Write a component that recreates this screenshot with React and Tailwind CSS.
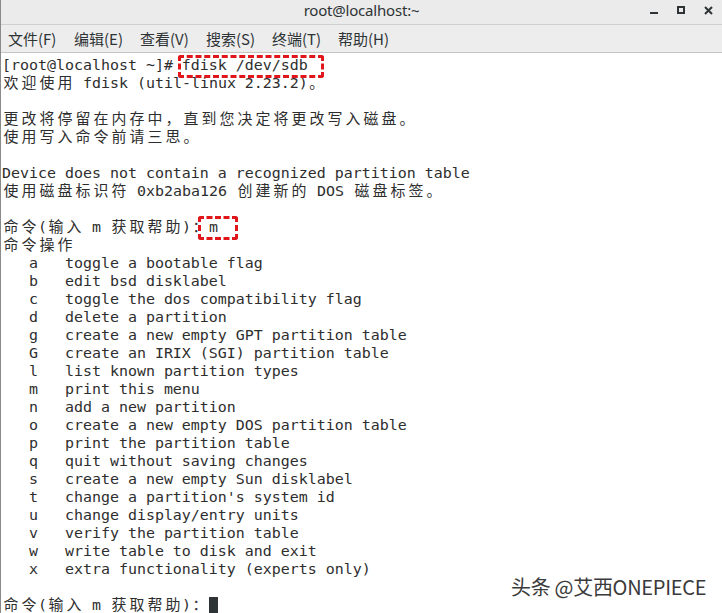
import React from 'react';

const mono = { fontFamily: '"DejaVu Sans Mono", "Noto Sans CJK SC", monospace' };

const menus = ['文件(F)', '编辑(E)', '查看(V)', '搜索(S)', '终端(T)', '帮助(H)'];

const lines = [
    '[root@localhost ~]# fdisk /dev/sdb',
    '欢迎使用 fdisk (util-linux 2.23.2)。',
    '',
    '更改将停留在内存中，直到您决定将更改写入磁盘。',
    '使用写入命令前请三思。',
    '',
    'Device does not contain a recognized partition table',
    '使用磁盘标识符 0xb2aba126 创建新的 DOS 磁盘标签。',
    '',
    '命令(输入 m 获取帮助)：m',
    '命令操作',
    '   a   toggle a bootable flag',
    '   b   edit bsd disklabel',
    '   c   toggle the dos compatibility flag',
    '   d   delete a partition',
    '   g   create a new empty GPT partition table',
    '   G   create an IRIX (SGI) partition table',
    '   l   list known partition types',
    '   m   print this menu',
    '   n   add a new partition',
    '   o   create a new empty DOS partition table',
    '   p   print the partition table',
    '   q   quit without saving changes',
    '   s   create a new empty Sun disklabel',
    "   t   change a partition's system id",
    '   u   change display/entry units',
    '   v   verify the partition table',
    '   w   write table to disk and exit',
    '   x   extra functionality (experts only)',
    '',
];

// wide (CJK) characters take two terminal cells
const Cells = ({ text }) => {
    const parts = [];
    let buf = '';
    Array.from(text).forEach((ch, i) => {
        if (ch.charCodeAt(0) >= 0x2e80) {
            if (buf) parts.push(buf);
            buf = '';
            parts.push(
                <span key={i} className="inline-block w-[18px] text-center">{ch}</span>
            );
        } else {
            buf += ch;
        }
    });
    if (buf) parts.push(buf);
    return parts;
};

const App = () => {
    return (
        <div className="w-[722px] h-[613px] overflow-hidden bg-white border-l border-[#8a8a8a] relative">
            {/* title bar */}
            <div
                className="h-[25px] bg-[#ebebeb] border-b border-[#cfcfcf] flex items-center relative"
                style={{ fontFamily: '"Noto Sans", "Liberation Sans", sans-serif' }}
            >
                <div className="flex-1 text-center text-[15px] leading-[15px] text-[#2e3436] pb-[4px] tracking-[-0.2px]">root@localhost:~</div>
                <div className="absolute right-0 top-0 h-full flex items-center gap-[19px] pr-[9px] pb-[4px] text-[#2e3436]">
                    <svg width="8" height="8" viewBox="0 0 8 8"><rect x="0" y="6" width="8" height="2" fill="currentColor" /></svg>
                    <svg width="8" height="8" viewBox="0 0 8 8"><rect x="1" y="1" width="6" height="6" fill="none" stroke="currentColor" strokeWidth="2" /></svg>
                    <svg width="9" height="9" viewBox="0 0 9 9"><path d="M1 1L8 8M8 1L1 8" stroke="currentColor" strokeWidth="2" /></svg>
                </div>
            </div>
            {/* menu bar */}
            <div
                className="h-[28px] bg-[#ededed] border-b border-[#c4c4c4] flex items-center pl-[7px] gap-[14px] text-[15px] text-[#2e3436] pt-[2px]"
                style={{ fontFamily: '"Noto Sans CJK SC", "DejaVu Sans", sans-serif' }}
            >
                {menus.map((m) => (
                    <span key={m} className="w-[52px] whitespace-nowrap">{m}</span>
                ))}
            </div>
            {/* terminal */}
            <div className="pl-[1px] pt-[3px] text-[14.95px] text-[#2e2e2e]" style={mono}>
                {lines.map((l, i) => (
                    <div key={i} className="h-[18px] leading-[18px] whitespace-pre">
                        <Cells text={l} />
                    </div>
                ))}
                <div className="h-[18px] leading-[18px] whitespace-pre flex items-center">
                    <span><Cells text="命令(输入 m 获取帮助)：" /></span>
                    <span className="inline-block w-[9px] h-[16px] bg-[#2e3436]" />
                </div>
            </div>
            {/* red highlight boxes */}
            <div className="absolute left-[177px] top-[55px] w-[146px] h-[23px] border-[3px] border-dashed border-[#e0161b] rounded-[3px]" />
            <div className="absolute left-[197px] top-[216px] w-[40px] h-[24px] border-[3px] border-dashed border-[#e0161b] rounded-[3px]" />
            {/* watermark */}
            <div
                className="absolute left-[510px] top-[572px] text-[20px] text-[#3a3a3a] tracking-[-0.3px]"
                style={{ fontFamily: '"Noto Sans CJK SC", "Liberation Sans", sans-serif' }}
            >
                头条 @艾西ONEPIECE
            </div>
        </div>
    );
};

export default App;
